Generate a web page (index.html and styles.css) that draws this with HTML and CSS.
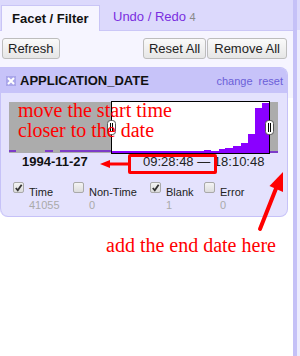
FILE: index.html
```html
<!DOCTYPE html>
<html>
<head>
<meta charset="utf-8">
<link rel="stylesheet" href="styles.css">
</head>
<body>
<div class="page">
  <div class="left">
    <div class="tabs">
      <div class="tab active">Facet / Filter</div>
      <div class="tab link">Undo / Redo <span class="count">4</span></div>
    </div>
    <div class="toolbar">
      <button class="btn">Refresh</button>
      <div class="group">
        <button class="btn">Reset All</button>
        <button class="btn">Remove All</button>
      </div>
    </div>
    <div class="facet">
      <div class="facet-head">
        <svg class="close-icon" width="10" height="10" viewBox="0 0 10 10"><rect x="0" y="0" width="10" height="10" fill="#aaa6ea"/><path d="M2 2 L8 8 M8 2 L2 8" stroke="#fff" stroke-width="2"/></svg>
        <span class="title">APPLICATION_DATE</span>
        <span class="links"><span class="lnk">change</span><span class="lnk">reset</span></span>
      </div>
      <div class="facet-body">
        <svg class="histo" width="286" height="58" viewBox="1 96 286 58">
          <rect x="10" y="101" width="269" height="51" fill="#acacac"/>
          <rect x="10" y="149" width="7" height="2" fill="#7d3cc8"/>
          <rect x="46" y="149" width="8" height="2" fill="#7d3cc8"/>
          <rect x="61" y="149" width="51" height="2" fill="#7d3cc8"/>
          <rect x="270" y="150" width="9" height="2" fill="#7d3cc8"/>
          <rect x="112.5" y="100.5" width="158" height="52" fill="#fff" stroke="#000"/>
          <rect x="113" y="150" width="157" height="2" fill="#8a00ff"/>
          <rect x="205" y="149" width="7" height="3" fill="#8a00ff"/>
          <rect x="220" y="148" width="6" height="4" fill="#8a00ff"/>
          <rect x="226" y="147" width="8" height="5" fill="#8a00ff"/>
          <rect x="234" y="145" width="8" height="7" fill="#8a00ff"/>
          <rect x="242" y="142" width="7" height="10" fill="#8a00ff"/>
          <rect x="249" y="133" width="7" height="19" fill="#8a00ff"/>
          <rect x="256" y="107" width="7" height="45" fill="#8a00ff"/>
          <rect x="263" y="102" width="7" height="50" fill="#8a00ff"/>
          <rect x="108.5" y="119.5" width="8" height="14" rx="3" fill="#fff" stroke="#555"/>
          <path d="M111.5 122 V131 M113.5 122 V131" stroke="#000"/>
          <rect x="266.5" y="119.5" width="8" height="14" rx="3" fill="#fff" stroke="#555"/>
          <path d="M269.5 122 V131 M271.5 122 V131" stroke="#000"/>
        </svg>
        <div class="range">
          <span class="date">1994-11-27</span>
          <span class="time">09:28:48 — 18:10:48</span>
        </div>
        <div class="choices">
          <div class="choice">
            <span class="cb checked"><svg width="10" height="10" viewBox="0 0 10 10"><path d="M2 5 L4.2 7.5 L8.5 1.5" fill="none" stroke="#333" stroke-width="2"/></svg></span>
            <div class="lab"><div>Time</div><div class="num">41055</div></div>
          </div>
          <div class="choice">
            <span class="cb"></span>
            <div class="lab"><div>Non-Time</div><div class="num">0</div></div>
          </div>
          <div class="choice">
            <span class="cb checked"><svg width="10" height="10" viewBox="0 0 10 10"><path d="M2 5 L4.2 7.5 L8.5 1.5" fill="none" stroke="#333" stroke-width="2"/></svg></span>
            <div class="lab"><div>Blank</div><div class="num">1</div></div>
          </div>
          <div class="choice">
            <span class="cb"></span>
            <div class="lab"><div>Error</div><div class="num">0</div></div>
          </div>
        </div>
      </div>
    </div>
  </div>
  <div class="strip"></div>
  <div class="edge">
    <div class="edge-top"></div>
  </div>

  <div class="note note-top">move the start time<br>closer to the date</div>
  <div class="redbox"></div>
  <svg class="arrows" width="300" height="356" viewBox="0 0 300 356">
    <line x1="129" y1="164" x2="108" y2="164" stroke="#f00" stroke-width="3"/>
    <polygon points="100,164 110,160 110,168" fill="#f00"/>
    <line x1="260" y1="229" x2="277" y2="186" stroke="#f00" stroke-width="4" stroke-linecap="round"/>
    <polygon points="283,172 269.5,186 283,192" fill="#f00"/>
  </svg>
  <div class="note note-bottom">add the end date here</div>
</div>
</body>
</html>
```

FILE: styles.css
```css
* { box-sizing: border-box; }
html, body { margin: 0; padding: 0; }
body {
  width: 300px;
  height: 356px;
  overflow: hidden;
  font-family: "Liberation Sans", Arial, sans-serif;
  font-size: 13px;
  color: #222;
  background: #fff;
}
.page {
  position: relative;
  display: flex;
  height: 356px;
}
.left {
  width: 293px;
  flex: none;
  background: #fff;
}
.tabs {
  height: 31px;
  background: #dcd9fc;
  border-bottom: 1px solid #cbc7f7;
  display: flex;
  align-items: flex-end;
  padding-left: 1px;
}
.tab {
  height: 26px;
  line-height: 25px;
  white-space: nowrap;
}
.tab.active {
  width: 99px;
  margin-bottom: -1px;
  padding-left: 10px;
  background: #f6f5ff;
  border: 1px solid #c9c5f6;
  border-bottom: 0;
  font-weight: bold;
  color: #111;
}
.tab.link {
  margin-left: 13px;
  color: #7a2ee0;
}
.count {
  font-size: 11px;
  color: #888;
}
.toolbar {
  display: flex;
  justify-content: space-between;
  padding: 7px 6px 0 2px;
  background: #f6f5ff;
  height: 67px;
  margin-bottom: -31px;
}
.group {
  display: flex;
  gap: 1px;
}
.btn {
  height: 21px;
  padding: 0 6px;
  font-family: "Liberation Sans", Arial, sans-serif;
  font-size: 13px;
  color: #222;
  background: linear-gradient(#fafafa, #e6e6e6);
  border: 1px solid #bdbdbd;
  border-radius: 3px;
  line-height: 19px;
}
.btn:first-child { padding: 0 5px; }
.facet {
  width: 288px;
  border: 1px solid #c6c2f8;
  border-left: 0;
  border-radius: 0 8px 8px 8px;
  overflow: hidden;
  background: #e4e2fd;
  position: relative;
}
.facet-head {
  height: 25px;
  background: #c7c3f9;
  display: flex;
  align-items: center;
  padding: 0 4px 0 6px;
}
.close-icon { flex: none; margin-right: 4px; margin-top: 1px; }
.title {
  font-weight: bold;
  color: #111;
  flex: 1;
}
.links {
  display: flex;
  gap: 6px;
  font-size: 11px;
  color: #6b60d8;
}
.facet-body {
  height: 123px;
  padding-top: 4px;
  border-left: 1px solid #c6c2f8;
  border-bottom-left-radius: 8px;
}
.histo {
  display: block;
  margin-left: -1px;
}
.range {
  display: flex;
  height: 20px;
  align-items: center;
  padding-left: 21px;
  margin-top: -4px;
}
.date {
  font-weight: bold;
  color: #111;
  width: 121px;
}
.time {
  color: #222;
}
.choices {
  display: grid;
  grid-template-columns: 60px 77px 54px auto;
  padding-left: 12px;
  margin-top: 11px;
  font-size: 11px;
  line-height: 11px;
}
.choice {
  display: flex;
  align-items: flex-start;
}
.cb {
  width: 11px;
  height: 11px;
  flex: none;
  border: 1px solid #a9a9a9;
  border-radius: 2px;
  background: linear-gradient(#f4f4f4, #dcdcdc);
  margin-right: 5px;
  display: flex;
  align-items: center;
  justify-content: center;
}
.lab { color: #222; padding-top: 5px; }
.num { color: #aaa; margin-top: 2px; }
.strip {
  width: 4px;
  flex: none;
  background: #c5c1f7;
}
.edge {
  flex: 1;
  background: #ecebfe;
}
.edge-top {
  height: 30px;
  background: #dcd9fc;
}
.note {
  position: absolute;
  font-family: "Liberation Serif", "Times New Roman", serif;
  font-size: 20px;
  line-height: 20px;
  color: #f00;
  white-space: nowrap;
}
.note-top { left: 18px; top: 100px; }
.note-bottom { left: 106px; top: 235px; }
.redbox {
  position: absolute;
  left: 128px;
  top: 154px;
  width: 89px;
  height: 20px;
  border: 3px solid #f00;
  border-radius: 2px;
}
.arrows {
  position: absolute;
  left: 0;
  top: 0;
}
```
